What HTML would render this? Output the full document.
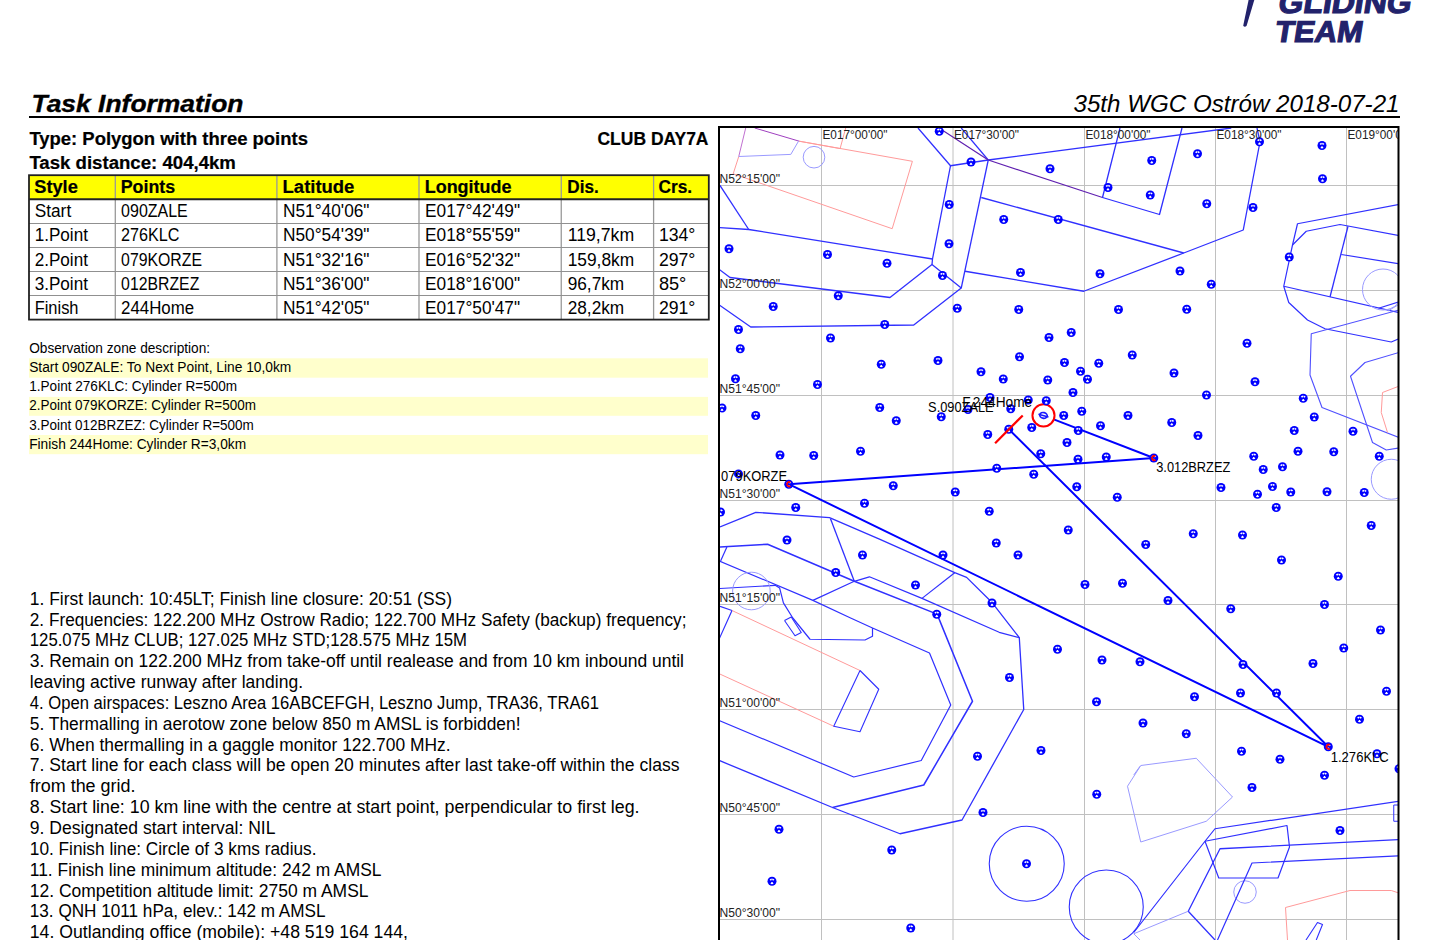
<!DOCTYPE html>
<html><head><meta charset="utf-8"><title>Task Information</title>
<style>html,body{margin:0;padding:0;background:#fff;width:1440px;height:940px;overflow:hidden}
svg{display:block;font-family:"Liberation Sans", sans-serif}</style></head>
<body><svg width="1440" height="940" viewBox="0 0 1440 940">
<defs>
<symbol id="w" viewBox="-5 -5 10 10" overflow="visible"><circle r="4.5" fill="#0000ff"/><path d="M-1.04,-0.60 L-2.42,-1.40 A2.8,2.8 0 0 1 -0.34,-2.78 L-0.15,-1.19 A1.2,1.2 0 0 0 -1.04,-0.60 Z M0.15,-1.19 L0.34,-2.78 A2.8,2.8 0 0 1 2.42,-1.40 L1.04,-0.60 A1.2,1.2 0 0 0 0.15,-1.19 Z M0.42,0.68 L1.59,2.54 A3.0,3.0 0 0 1 -1.59,2.54 L-0.42,0.68 A0.8,0.8 0 0 0 0.42,0.68 Z" fill="#fff"/></symbol>
<clipPath id="mc"><rect x="720" y="128" width="678" height="812"/></clipPath>
</defs>
<g fill="#22226b" stroke="#22226b" stroke-width="1.1" font-weight="bold" font-size="30">
<text transform="translate(1277.3,13.1) skewX(-9)" textLength="133" lengthAdjust="spacingAndGlyphs">GLIDING</text>
<text transform="translate(1274.0,42) skewX(-9)" textLength="87.5" lengthAdjust="spacingAndGlyphs">TEAM</text>
</g>
<path d="M1248.8,-1 L1254.6,-1 L1246.6,25.8 Q1244.8,27.8 1243.2,25.8 Z" fill="#22226b"/>
<text x="31.5" y="112" font-size="23.5" font-weight="bold" font-style="italic" textLength="212.0" lengthAdjust="spacingAndGlyphs" stroke="#000" stroke-width="0.35">Task Information</text>
<text x="1073.5" y="112" font-size="23.5" font-style="italic" textLength="326.0" lengthAdjust="spacingAndGlyphs">35th WGC Ostrów 2018-07-21</text>
<rect x="29" y="116" width="1371" height="2" fill="#000"/>
<text x="29.4" y="144.7" font-size="17.5" font-weight="bold" textLength="278.5" lengthAdjust="spacingAndGlyphs" stroke="#000" stroke-width="0.2">Type: Polygon with three points</text>
<text x="29.4" y="168.7" font-size="17.5" font-weight="bold" textLength="206.5" lengthAdjust="spacingAndGlyphs" stroke="#000" stroke-width="0.2">Task distance: 404,4km</text>
<text x="597.5" y="144.7" font-size="17.5" font-weight="bold" textLength="111.0" lengthAdjust="spacingAndGlyphs" stroke="#000" stroke-width="0.2">CLUB DAY7A</text>
<rect x="29" y="175.2" width="679.8" height="24.0" fill="#ffff00"/>
<line x1="115.3" y1="175.2" x2="115.3" y2="319.6" stroke="#999" stroke-width="1.3"/>
<line x1="276.9" y1="175.2" x2="276.9" y2="319.6" stroke="#999" stroke-width="1.3"/>
<line x1="419.0" y1="175.2" x2="419.0" y2="319.6" stroke="#999" stroke-width="1.3"/>
<line x1="561.25" y1="175.2" x2="561.25" y2="319.6" stroke="#999" stroke-width="1.3"/>
<line x1="653.6" y1="175.2" x2="653.6" y2="319.6" stroke="#999" stroke-width="1.3"/>
<line x1="29" y1="223.5" x2="708.8" y2="223.5" stroke="#909090" stroke-width="1"/>
<line x1="29" y1="247.5" x2="708.8" y2="247.5" stroke="#909090" stroke-width="1"/>
<line x1="29" y1="271.5" x2="708.8" y2="271.5" stroke="#909090" stroke-width="1"/>
<line x1="29" y1="295.5" x2="708.8" y2="295.5" stroke="#909090" stroke-width="1"/>
<line x1="29" y1="199.2" x2="708.8" y2="199.2" stroke="#222" stroke-width="2"/>
<rect x="29" y="175.2" width="679.8" height="144.40000000000003" fill="none" stroke="#222" stroke-width="1.8"/>
<text x="34.300000000000004" y="192.8" font-size="17.5" font-weight="bold" textLength="43.5" lengthAdjust="spacingAndGlyphs" stroke="#000" stroke-width="0.2">Style</text>
<text x="120.7" y="192.8" font-size="17.5" font-weight="bold" textLength="54.4" lengthAdjust="spacingAndGlyphs" stroke="#000" stroke-width="0.2">Points</text>
<text x="282.59999999999997" y="192.8" font-size="17.5" font-weight="bold" textLength="71.8" lengthAdjust="spacingAndGlyphs" stroke="#000" stroke-width="0.2">Latitude</text>
<text x="424.7" y="192.8" font-size="17.5" font-weight="bold" textLength="86.8" lengthAdjust="spacingAndGlyphs" stroke="#000" stroke-width="0.2">Longitude</text>
<text x="567.3" y="192.8" font-size="17.5" font-weight="bold" textLength="31.4" lengthAdjust="spacingAndGlyphs" stroke="#000" stroke-width="0.2">Dis.</text>
<text x="658.5000000000001" y="192.8" font-size="17.5" font-weight="bold" textLength="33.6" lengthAdjust="spacingAndGlyphs" stroke="#000" stroke-width="0.2">Crs.</text>
<text x="34.7" y="217.2" font-size="17.5" textLength="36.5" lengthAdjust="spacingAndGlyphs">Start</text>
<text x="121.1" y="217.2" font-size="17.5" textLength="66.7" lengthAdjust="spacingAndGlyphs">090ZALE</text>
<text x="283.0" y="217.2" font-size="17.5" textLength="86.5" lengthAdjust="spacingAndGlyphs">N51°40'06&quot;</text>
<text x="425.1" y="217.2" font-size="17.5" textLength="95.0" lengthAdjust="spacingAndGlyphs">E017°42'49&quot;</text>
<text x="34.7" y="241.1" font-size="17.5" textLength="53.2" lengthAdjust="spacingAndGlyphs">1.Point</text>
<text x="121.1" y="241.1" font-size="17.5" textLength="58.4" lengthAdjust="spacingAndGlyphs">276KLC</text>
<text x="283.0" y="241.1" font-size="17.5" textLength="86.5" lengthAdjust="spacingAndGlyphs">N50°54'39&quot;</text>
<text x="425.1" y="241.1" font-size="17.5" textLength="95.0" lengthAdjust="spacingAndGlyphs">E018°55'59&quot;</text>
<text x="567.6999999999999" y="241.1" font-size="17.5" textLength="66.5" lengthAdjust="spacingAndGlyphs">119,7km</text>
<text x="658.9000000000001" y="241.1" font-size="17.5" textLength="36.5" lengthAdjust="spacingAndGlyphs">134°</text>
<text x="34.7" y="265.5" font-size="17.5" textLength="53.2" lengthAdjust="spacingAndGlyphs">2.Point</text>
<text x="121.1" y="265.5" font-size="17.5" textLength="80.9" lengthAdjust="spacingAndGlyphs">079KORZE</text>
<text x="283.0" y="265.5" font-size="17.5" textLength="86.5" lengthAdjust="spacingAndGlyphs">N51°32'16&quot;</text>
<text x="425.1" y="265.5" font-size="17.5" textLength="95.0" lengthAdjust="spacingAndGlyphs">E016°52'32&quot;</text>
<text x="567.6999999999999" y="265.5" font-size="17.5" textLength="66.5" lengthAdjust="spacingAndGlyphs">159,8km</text>
<text x="658.9000000000001" y="265.5" font-size="17.5" textLength="36.5" lengthAdjust="spacingAndGlyphs">297°</text>
<text x="34.7" y="289.7" font-size="17.5" textLength="53.2" lengthAdjust="spacingAndGlyphs">3.Point</text>
<text x="121.1" y="289.7" font-size="17.5" textLength="78.2" lengthAdjust="spacingAndGlyphs">012BRZEZ</text>
<text x="283.0" y="289.7" font-size="17.5" textLength="86.5" lengthAdjust="spacingAndGlyphs">N51°36'00&quot;</text>
<text x="425.1" y="289.7" font-size="17.5" textLength="95.0" lengthAdjust="spacingAndGlyphs">E018°16'00&quot;</text>
<text x="567.6999999999999" y="289.7" font-size="17.5" textLength="56.5" lengthAdjust="spacingAndGlyphs">96,7km</text>
<text x="658.9000000000001" y="289.7" font-size="17.5" textLength="27.5" lengthAdjust="spacingAndGlyphs">85°</text>
<text x="34.7" y="313.6" font-size="17.5" textLength="43.8" lengthAdjust="spacingAndGlyphs">Finish</text>
<text x="121.1" y="313.6" font-size="17.5" textLength="73.0" lengthAdjust="spacingAndGlyphs">244Home</text>
<text x="283.0" y="313.6" font-size="17.5" textLength="86.5" lengthAdjust="spacingAndGlyphs">N51°42'05&quot;</text>
<text x="425.1" y="313.6" font-size="17.5" textLength="95.0" lengthAdjust="spacingAndGlyphs">E017°50'47&quot;</text>
<text x="567.6999999999999" y="313.6" font-size="17.5" textLength="56.5" lengthAdjust="spacingAndGlyphs">28,2km</text>
<text x="658.9000000000001" y="313.6" font-size="17.5" textLength="36.5" lengthAdjust="spacingAndGlyphs">291°</text>
<rect x="29" y="358.3" width="679" height="19.4" fill="#ffffcc"/>
<rect x="29" y="396.9" width="679" height="18.9" fill="#ffffcc"/>
<rect x="29" y="435" width="679" height="19.2" fill="#ffffcc"/>
<text x="29.2" y="352.7" font-size="14" textLength="180.9" lengthAdjust="spacingAndGlyphs">Observation zone description:</text>
<text x="29.2" y="371.9" font-size="14" textLength="262.1" lengthAdjust="spacingAndGlyphs">Start 090ZALE: To Next Point, Line 10,0km</text>
<text x="29.2" y="391.1" font-size="14" textLength="208.0" lengthAdjust="spacingAndGlyphs">1.Point 276KLC: Cylinder R=500m</text>
<text x="29.2" y="410.3" font-size="14" textLength="226.7" lengthAdjust="spacingAndGlyphs">2.Point 079KORZE: Cylinder R=500m</text>
<text x="29.2" y="429.5" font-size="14" textLength="224.6" lengthAdjust="spacingAndGlyphs">3.Point 012BRZEZ: Cylinder R=500m</text>
<text x="29.2" y="448.7" font-size="14" textLength="216.9" lengthAdjust="spacingAndGlyphs">Finish 244Home: Cylinder R=3,0km</text>
<text x="29.8" y="604.6" font-size="17.5" textLength="422.2" lengthAdjust="spacingAndGlyphs">1. First launch: 10:45LT; Finish line closure: 20:51 (SS)</text>
<text x="29.8" y="625.5" font-size="17.5" textLength="656.7" lengthAdjust="spacingAndGlyphs">2. Frequencies: 122.200 MHz Ostrow Radio; 122.700 MHz Safety (backup) frequency;</text>
<text x="29.8" y="646.3" font-size="17.5" textLength="437.2" lengthAdjust="spacingAndGlyphs">125.075 MHz CLUB; 127.025 MHz STD;128.575 MHz 15M</text>
<text x="29.8" y="667.1" font-size="17.5" textLength="654.2" lengthAdjust="spacingAndGlyphs">3. Remain on 122.200 MHz from take-off until realease and from 10 km inbound until</text>
<text x="29.8" y="688.0" font-size="17.5" textLength="273.2" lengthAdjust="spacingAndGlyphs">leaving active runway after landing.</text>
<text x="29.8" y="708.9" font-size="17.5" textLength="569.2" lengthAdjust="spacingAndGlyphs">4. Open airspaces: Leszno Area 16ABCEFGH, Leszno Jump, TRA36, TRA61</text>
<text x="29.8" y="729.7" font-size="17.5" textLength="490.7" lengthAdjust="spacingAndGlyphs">5. Thermalling in aerotow zone below 850 m AMSL is forbidden!</text>
<text x="29.8" y="750.6" font-size="17.5" textLength="420.7" lengthAdjust="spacingAndGlyphs">6. When thermalling in a gaggle monitor 122.700 MHz.</text>
<text x="29.8" y="771.4" font-size="17.5" textLength="649.7" lengthAdjust="spacingAndGlyphs">7. Start line for each class will be open 20 minutes after last take-off within the class</text>
<text x="29.8" y="792.2" font-size="17.5" textLength="105.7" lengthAdjust="spacingAndGlyphs">from the grid.</text>
<text x="29.8" y="813.1" font-size="17.5" textLength="609.7" lengthAdjust="spacingAndGlyphs">8. Start line: 10 km line with the centre at start point, perpendicular to first leg.</text>
<text x="29.8" y="834.0" font-size="17.5" textLength="245.7" lengthAdjust="spacingAndGlyphs">9. Designated start interval: NIL</text>
<text x="29.8" y="854.8" font-size="17.5" textLength="286.7" lengthAdjust="spacingAndGlyphs">10. Finish line: Circle of 3 kms radius.</text>
<text x="29.8" y="875.7" font-size="17.5" textLength="351.7" lengthAdjust="spacingAndGlyphs">11. Finish line minimum altitude: 242 m AMSL</text>
<text x="29.8" y="896.5" font-size="17.5" textLength="338.7" lengthAdjust="spacingAndGlyphs">12. Competition altitude limit: 2750 m AMSL</text>
<text x="29.8" y="917.4" font-size="17.5" textLength="295.7" lengthAdjust="spacingAndGlyphs">13. QNH 1011 hPa, elev.: 142 m AMSL</text>
<text x="29.8" y="938.2" font-size="17.5" textLength="378.2" lengthAdjust="spacingAndGlyphs">14. Outlanding office (mobile): +48 519 164 144,</text>
<g clip-path="url(#mc)">
<line x1="821.5" y1="128" x2="821.5" y2="940" stroke="#c0c0c0" stroke-width="1"/>
<line x1="953.0" y1="128" x2="953.0" y2="940" stroke="#c0c0c0" stroke-width="1"/>
<line x1="1084.5" y1="128" x2="1084.5" y2="940" stroke="#c0c0c0" stroke-width="1"/>
<line x1="1215.5" y1="128" x2="1215.5" y2="940" stroke="#c0c0c0" stroke-width="1"/>
<line x1="1346.5" y1="128" x2="1346.5" y2="940" stroke="#c0c0c0" stroke-width="1"/>
<line x1="720" y1="185.5" x2="1398" y2="185.5" stroke="#c0c0c0" stroke-width="1"/>
<line x1="720" y1="290.5" x2="1398" y2="290.5" stroke="#c0c0c0" stroke-width="1"/>
<line x1="720" y1="395.5" x2="1398" y2="395.5" stroke="#c0c0c0" stroke-width="1"/>
<line x1="720" y1="500.5" x2="1398" y2="500.5" stroke="#c0c0c0" stroke-width="1"/>
<line x1="720" y1="604.5" x2="1398" y2="604.5" stroke="#c0c0c0" stroke-width="1"/>
<line x1="720" y1="709.5" x2="1398" y2="709.5" stroke="#c0c0c0" stroke-width="1"/>
<line x1="720" y1="814.5" x2="1398" y2="814.5" stroke="#c0c0c0" stroke-width="1"/>
<line x1="720" y1="919.5" x2="1398" y2="919.5" stroke="#c0c0c0" stroke-width="1"/>
<path d="M738.75,156.5 L733.2,173.8 L892.2,228.7 L912.4,161.3 L799.2,141.2 L840.1,148.6" fill="none" stroke="#ff9a9a" stroke-width="1.0" stroke-linejoin="round"/>
<path d="M840.1,148.6 L845.7,128" fill="none" stroke="#ff9a9a" stroke-width="1.0" stroke-linejoin="round"/>
<path d="M754.7,128 L799.2,141.2" fill="none" stroke="#a040c0" stroke-width="1.0" stroke-linejoin="round"/>
<path d="M745.7,128 L738.75,156.5" fill="none" stroke="#c070d0" stroke-width="1.0" stroke-linejoin="round"/>
<path d="M738.75,156.5 L790.8,154.4 L798.5,141.2" fill="none" stroke="#9a9aff" stroke-width="1.0" stroke-linejoin="round"/>
<circle cx="814" cy="157.2" r="10.8" fill="none" stroke="#9a9aff" stroke-width="1.0"/>
<path d="M918,128 L950.5,165.75 L988.25,160 L1231.25,128" fill="none" stroke="#3030ff" stroke-width="1.3" stroke-linejoin="round"/>
<path d="M961.25,128 L988.25,160" fill="none" stroke="#3030ff" stroke-width="1.2" stroke-linejoin="round"/>
<path d="M939,128 L988.25,160 L1102.5,197.5" fill="none" stroke="#6020b0" stroke-width="1.2" stroke-linejoin="round"/>
<path d="M950.5,165.75 L932.5,259 L932,264.5" fill="none" stroke="#3030ff" stroke-width="1.3" stroke-linejoin="round"/>
<path d="M988.25,160 L961.25,288" fill="none" stroke="#3030ff" stroke-width="1.3" stroke-linejoin="round"/>
<path d="M719,184 L748.75,229.5" fill="none" stroke="#3030ff" stroke-width="1.3" stroke-linejoin="round"/>
<path d="M719.25,227.5 L748.75,229.5 L932.5,259" fill="none" stroke="#3030ff" stroke-width="1.3" stroke-linejoin="round"/>
<path d="M719.25,269.5 L730,277.5 L890,297.5 L932,264.5 L961.25,288 L913.75,325 L750.75,327 L719.25,305" fill="none" stroke="#3030ff" stroke-width="1.3" stroke-linejoin="round"/>
<path d="M981.25,197.5 L1183.75,253" fill="none" stroke="#3030ff" stroke-width="1.3" stroke-linejoin="round"/>
<path d="M965,271.25 L1083.75,291.25 L1183.75,253 L1243.25,230 L1260,141.75 L1257,128" fill="none" stroke="#3030ff" stroke-width="1.3" stroke-linejoin="round"/>
<path d="M1120,128 L1102.5,197.5 L1159.5,214.5 L1182,128" fill="none" stroke="#3030ff" stroke-width="1.3" stroke-linejoin="round"/>
<path d="M1398.75,204.5 L1297.5,223.75 L1292.5,245 L1283.75,286.25 L1398.75,312.5" fill="none" stroke="#3030ff" stroke-width="1.2" stroke-linejoin="round"/>
<path d="M1292.5,245 L1306.25,231.25 L1340,224.5 L1398.75,235.5" fill="none" stroke="#3030ff" stroke-width="1.2" stroke-linejoin="round"/>
<path d="M1348,226.25 L1330,297" fill="none" stroke="#3030ff" stroke-width="1.3" stroke-linejoin="round"/>
<path d="M1341.25,254.5 L1398.75,263.75" fill="none" stroke="#3030ff" stroke-width="1.2" stroke-linejoin="round"/>
<path d="M1283.75,286.25 L1288.75,302.5 L1307.5,320 L1325,328.75 L1391.25,342 L1398.75,338.75" fill="none" stroke="#3030ff" stroke-width="1.2" stroke-linejoin="round"/>
<path d="M1398.75,310 L1311.25,333.75 L1310,375 L1322,407.5 L1398.75,437.5" fill="none" stroke="#5050ff" stroke-width="1.1" stroke-linejoin="round"/>
<path d="M1398.75,352.5 L1365,362.5 L1350.5,376.25 L1372.5,442.5 L1386.25,450 L1398.75,448" fill="none" stroke="#5050ff" stroke-width="1.1" stroke-linejoin="round"/>
<path d="M1398.75,386.25 L1382.5,392.5 L1381.25,412.5 L1387.5,432.5" fill="none" stroke="#ff9a9a" stroke-width="1.0" stroke-linejoin="round"/>
<circle cx="1383" cy="289.5" r="20.5" fill="none" stroke="#9a9aff" stroke-width="1.0"/>
<circle cx="1391.25" cy="479.25" r="20" fill="none" stroke="#9a9aff" stroke-width="1.0"/>
<path d="M1378.6,308.3 L1398.75,302" fill="none" stroke="#3030ff" stroke-width="1.2" stroke-linejoin="round"/>
<path d="M1388,311 L1398.75,304.5" fill="none" stroke="#9a9aff" stroke-width="1.0" stroke-linejoin="round"/>
<path d="M720,527 L755.8,512.3 L829.5,517.6 L880,539.4 L954.7,572.7 L966.6,577.4 L992.3,602.8 L1019.3,637.7 L1023.75,709.5 L962,820 L900,833.75 L832.5,807.5 L719.25,760.5" fill="none" stroke="#3030ff" stroke-width="1.3" stroke-linejoin="round"/>
<path d="M830.5,518.8 L854.3,581.3" fill="none" stroke="#3030ff" stroke-width="1.3" stroke-linejoin="round"/>
<path d="M719.25,547 L767.6,544.3 L854.3,581.3 L937.1,614.1 L972.5,701.25 L923.75,785 L832.5,807.5" fill="none" stroke="#3030ff" stroke-width="1.5" stroke-linejoin="round"/>
<path d="M720,561.25 L812.9,600.4 L850.6,618 L872.5,628 L929.5,653 L950.75,705 L921.25,760.5 L853.75,777 L719.25,720.5" fill="none" stroke="#3030ff" stroke-width="1.2" stroke-linejoin="round"/>
<path d="M812.9,600.4 L854.3,581.3 L869.4,576.8 L922,598.4 L999.2,632.3 L1019.3,637.7" fill="none" stroke="#3030ff" stroke-width="1.2" stroke-linejoin="round"/>
<path d="M954.7,572.7 L922,598.4" fill="none" stroke="#3030ff" stroke-width="1.2" stroke-linejoin="round"/>
<path d="M720,588.5 L775.2,585.35 L779.6,587.9 L783.4,602.9 L792.8,618 L810,639.25 L865,640 L872.5,636.25 L872.5,628" fill="none" stroke="#3030ff" stroke-width="1.2" stroke-linejoin="round"/>
<path d="M720.6,560.9 L726.9,547" fill="none" stroke="#3030ff" stroke-width="1.2" stroke-linejoin="round"/>
<path d="M720,606.4 L732,610.5 L719.25,638.75" fill="none" stroke="#3030ff" stroke-width="1.2" stroke-linejoin="round"/>
<path d="M732,610.5 L860,670.5" fill="none" stroke="#ff9a9a" stroke-width="1.0" stroke-linejoin="round"/>
<path d="M719.25,673.75 L833.75,726.25" fill="none" stroke="#ff9a9a" stroke-width="1.0" stroke-linejoin="round"/>
<path d="M860,670.5 L878.75,689.25 L860,731.75 L833.75,726.25 L860,670.5" fill="none" stroke="#3030ff" stroke-width="1.1" stroke-linejoin="round"/>
<path d="M784.5,620.5 L791.25,617 L801.25,632.5 L795,635.75 L784.5,620.5" fill="none" stroke="#3030ff" stroke-width="1.1" stroke-linejoin="round"/>
<circle cx="751.4" cy="591" r="18.8" fill="none" stroke="#9a9aff" stroke-width="1.0"/>
<circle cx="1026.75" cy="863.75" r="37.5" fill="none" stroke="#3030ff" stroke-width="1.1"/>
<circle cx="1106.25" cy="907" r="37" fill="none" stroke="#3030ff" stroke-width="1.1"/>
<circle cx="1245" cy="892" r="11.25" fill="none" stroke="#9a9aff" stroke-width="1.0"/>
<path d="M1140.75,765.5 L1196.25,758.25 L1232.5,797 L1206.25,821.25 L1140.75,842 L1127.5,786.25 L1140.75,765.5" fill="none" stroke="#9a9aff" stroke-width="1.0" stroke-linejoin="round"/>
<path d="M1133.75,932.5 L1205,841.25 L1215,828.75 L1398.75,801.25" fill="none" stroke="#3030ff" stroke-width="1.2" stroke-linejoin="round"/>
<path d="M1205,841.25 L1287,825.5 L1289.5,847 L1278,878 L1218.75,878 L1205,841.25" fill="none" stroke="#3030ff" stroke-width="1.2" stroke-linejoin="round"/>
<path d="M1398.75,839.5 L1220,848.75 L1188.25,911.25 L1215,940" fill="none" stroke="#3030ff" stroke-width="1.3" stroke-linejoin="round"/>
<path d="M1398.75,855.75 L1252,863 L1217.5,940" fill="none" stroke="#3030ff" stroke-width="1.2" stroke-linejoin="round"/>
<path d="M1188.25,911.25 L1133.75,933.75 L1140,940" fill="none" stroke="#9a9aff" stroke-width="1.0" stroke-linejoin="round"/>
<path d="M1287.5,940 L1285.5,907.5 L1350,890.5 L1391.25,890.5 L1398.75,893" fill="none" stroke="#ff9a9a" stroke-width="1.0" stroke-linejoin="round"/>
<path d="M1398.75,805 L1393.75,805 L1393.75,821.25 L1398.75,821.25" fill="none" stroke="#3030ff" stroke-width="1.0" stroke-linejoin="round"/>
<path d="M1306,940 L1317.5,922.5 L1322.5,924.5 L1316.25,940" fill="none" stroke="#3030ff" stroke-width="1.1" stroke-linejoin="round"/>
<path d="M1133.75,775 L1140,766.25" fill="none" stroke="#9a9aff" stroke-width="1.0" stroke-linejoin="round"/>
<path d="M1008.8,429.3 L1328.3,746.8 L788.8,484.2 L1153.8,458.0" fill="none" stroke="#0000ff" stroke-width="2.0" stroke-linejoin="round"/>
<path d="M1053.761276954651,419.3631042454047 L1153.8,458.0" fill="none" stroke="#0000ff" stroke-width="2.0" stroke-linejoin="round"/>
<circle cx="1043.5" cy="415.4" r="11.05" fill="none" stroke="#ff0000" stroke-width="2.0"/>
<use href="#w" x="934.25" y="126.25" width="10" height="10"/>
<use href="#w" x="966" y="157" width="10" height="10"/>
<use href="#w" x="1045" y="163.75" width="10" height="10"/>
<use href="#w" x="944.25" y="199.5" width="10" height="10"/>
<use href="#w" x="998.75" y="214.5" width="10" height="10"/>
<use href="#w" x="1053.25" y="214.5" width="10" height="10"/>
<use href="#w" x="944" y="238.75" width="10" height="10"/>
<use href="#w" x="724" y="243.75" width="10" height="10"/>
<use href="#w" x="822.5" y="249.5" width="10" height="10"/>
<use href="#w" x="882" y="258.25" width="10" height="10"/>
<use href="#w" x="1015.5" y="267.5" width="10" height="10"/>
<use href="#w" x="937.5" y="270.5" width="10" height="10"/>
<use href="#w" x="833.25" y="290.75" width="10" height="10"/>
<use href="#w" x="768.25" y="301.5" width="10" height="10"/>
<use href="#w" x="952.25" y="303.25" width="10" height="10"/>
<use href="#w" x="1013.75" y="304.5" width="10" height="10"/>
<use href="#w" x="733.5" y="324.5" width="10" height="10"/>
<use href="#w" x="879.75" y="319.5" width="10" height="10"/>
<use href="#w" x="825.5" y="333" width="10" height="10"/>
<use href="#w" x="1044" y="332.5" width="10" height="10"/>
<use href="#w" x="1066.25" y="327.5" width="10" height="10"/>
<use href="#w" x="735.25" y="343.75" width="10" height="10"/>
<use href="#w" x="1146.75" y="155.5" width="10" height="10"/>
<use href="#w" x="1192.5" y="148.75" width="10" height="10"/>
<use href="#w" x="1254.5" y="136.75" width="10" height="10"/>
<use href="#w" x="1317" y="140.5" width="10" height="10"/>
<use href="#w" x="1317.5" y="173.75" width="10" height="10"/>
<use href="#w" x="1103" y="182.5" width="10" height="10"/>
<use href="#w" x="1145.25" y="190" width="10" height="10"/>
<use href="#w" x="1201.75" y="198.75" width="10" height="10"/>
<use href="#w" x="1248" y="202.5" width="10" height="10"/>
<use href="#w" x="1284.25" y="252" width="10" height="10"/>
<use href="#w" x="1095" y="268.75" width="10" height="10"/>
<use href="#w" x="1175" y="266" width="10" height="10"/>
<use href="#w" x="1206.25" y="279.25" width="10" height="10"/>
<use href="#w" x="1113.5" y="304.5" width="10" height="10"/>
<use href="#w" x="1181.75" y="304.25" width="10" height="10"/>
<use href="#w" x="1242" y="338.25" width="10" height="10"/>
<use href="#w" x="876.25" y="359.25" width="10" height="10"/>
<use href="#w" x="933" y="355.5" width="10" height="10"/>
<use href="#w" x="1014.5" y="351.75" width="10" height="10"/>
<use href="#w" x="1059.5" y="357.5" width="10" height="10"/>
<use href="#w" x="976" y="366.75" width="10" height="10"/>
<use href="#w" x="998.25" y="374" width="10" height="10"/>
<use href="#w" x="1042.75" y="375" width="10" height="10"/>
<use href="#w" x="730.5" y="373.75" width="10" height="10"/>
<use href="#w" x="812.5" y="379.5" width="10" height="10"/>
<use href="#w" x="1068" y="387.5" width="10" height="10"/>
<use href="#w" x="985" y="392.5" width="10" height="10"/>
<use href="#w" x="1023.25" y="395" width="10" height="10"/>
<use href="#w" x="1041.25" y="395.75" width="10" height="10"/>
<use href="#w" x="717" y="403" width="10" height="10"/>
<use href="#w" x="750.75" y="410.5" width="10" height="10"/>
<use href="#w" x="874.75" y="402.5" width="10" height="10"/>
<use href="#w" x="891.25" y="415.75" width="10" height="10"/>
<use href="#w" x="936.25" y="411.75" width="10" height="10"/>
<use href="#w" x="963" y="404.5" width="10" height="10"/>
<use href="#w" x="1005.75" y="403.75" width="10" height="10"/>
<use href="#w" x="1058.75" y="410.5" width="10" height="10"/>
<use href="#w" x="982.75" y="429.5" width="10" height="10"/>
<use href="#w" x="1003.75" y="424.25" width="10" height="10"/>
<use href="#w" x="1026.75" y="422.5" width="10" height="10"/>
<use href="#w" x="1062" y="437.5" width="10" height="10"/>
<use href="#w" x="775" y="450" width="10" height="10"/>
<use href="#w" x="808.75" y="450.5" width="10" height="10"/>
<use href="#w" x="855.5" y="446.25" width="10" height="10"/>
<use href="#w" x="1035.75" y="448.75" width="10" height="10"/>
<use href="#w" x="991.75" y="463.25" width="10" height="10"/>
<use href="#w" x="1028.75" y="469.25" width="10" height="10"/>
<use href="#w" x="733.5" y="468.9" width="10" height="10"/>
<use href="#w" x="888.25" y="480.75" width="10" height="10"/>
<use href="#w" x="950.25" y="487" width="10" height="10"/>
<use href="#w" x="715.5" y="507" width="10" height="10"/>
<use href="#w" x="790.75" y="502.5" width="10" height="10"/>
<use href="#w" x="859.5" y="498.25" width="10" height="10"/>
<use href="#w" x="984.25" y="506.25" width="10" height="10"/>
<use href="#w" x="1063.25" y="525" width="10" height="10"/>
<use href="#w" x="782" y="535" width="10" height="10"/>
<use href="#w" x="991.25" y="538" width="10" height="10"/>
<use href="#w" x="857.5" y="550" width="10" height="10"/>
<use href="#w" x="938" y="550" width="10" height="10"/>
<use href="#w" x="1013" y="550" width="10" height="10"/>
<use href="#w" x="1127.25" y="350" width="10" height="10"/>
<use href="#w" x="1093.75" y="358.25" width="10" height="10"/>
<use href="#w" x="1075.5" y="366.25" width="10" height="10"/>
<use href="#w" x="1082.5" y="374.25" width="10" height="10"/>
<use href="#w" x="1169" y="368" width="10" height="10"/>
<use href="#w" x="1250" y="376.75" width="10" height="10"/>
<use href="#w" x="1201.5" y="390" width="10" height="10"/>
<use href="#w" x="1298.25" y="393.25" width="10" height="10"/>
<use href="#w" x="1076.75" y="406.25" width="10" height="10"/>
<use href="#w" x="1123" y="410.5" width="10" height="10"/>
<use href="#w" x="1095.5" y="420.75" width="10" height="10"/>
<use href="#w" x="1166.75" y="417.5" width="10" height="10"/>
<use href="#w" x="1309.25" y="412" width="10" height="10"/>
<use href="#w" x="1073.25" y="425.5" width="10" height="10"/>
<use href="#w" x="1193" y="430.5" width="10" height="10"/>
<use href="#w" x="1289.25" y="425.5" width="10" height="10"/>
<use href="#w" x="1348" y="426.25" width="10" height="10"/>
<use href="#w" x="1293" y="446.25" width="10" height="10"/>
<use href="#w" x="1328.75" y="446.75" width="10" height="10"/>
<use href="#w" x="1073" y="454.25" width="10" height="10"/>
<use href="#w" x="1101.25" y="452" width="10" height="10"/>
<use href="#w" x="1248.75" y="451.25" width="10" height="10"/>
<use href="#w" x="1374.25" y="451.25" width="10" height="10"/>
<use href="#w" x="1258.25" y="464.5" width="10" height="10"/>
<use href="#w" x="1277.5" y="461.75" width="10" height="10"/>
<use href="#w" x="1071.75" y="481.75" width="10" height="10"/>
<use href="#w" x="1112.25" y="492.25" width="10" height="10"/>
<use href="#w" x="1216" y="482.5" width="10" height="10"/>
<use href="#w" x="1252.5" y="489.25" width="10" height="10"/>
<use href="#w" x="1267.5" y="481.5" width="10" height="10"/>
<use href="#w" x="1285.75" y="487" width="10" height="10"/>
<use href="#w" x="1322" y="486.75" width="10" height="10"/>
<use href="#w" x="1359.25" y="487.5" width="10" height="10"/>
<use href="#w" x="1271.25" y="502.5" width="10" height="10"/>
<use href="#w" x="1366.25" y="520.5" width="10" height="10"/>
<use href="#w" x="1140.75" y="539.5" width="10" height="10"/>
<use href="#w" x="1188.25" y="528.75" width="10" height="10"/>
<use href="#w" x="1237.5" y="530" width="10" height="10"/>
<use href="#w" x="1276.5" y="555" width="10" height="10"/>
<use href="#w" x="830.75" y="567.5" width="10" height="10"/>
<use href="#w" x="910.5" y="580" width="10" height="10"/>
<use href="#w" x="987" y="598" width="10" height="10"/>
<use href="#w" x="931.75" y="609.25" width="10" height="10"/>
<use href="#w" x="1052.5" y="644.25" width="10" height="10"/>
<use href="#w" x="1004.5" y="672.5" width="10" height="10"/>
<use href="#w" x="972.5" y="751.25" width="10" height="10"/>
<use href="#w" x="1036" y="745.5" width="10" height="10"/>
<use href="#w" x="1333.25" y="571.25" width="10" height="10"/>
<use href="#w" x="1080" y="579.5" width="10" height="10"/>
<use href="#w" x="1117.5" y="578.25" width="10" height="10"/>
<use href="#w" x="1163" y="595.5" width="10" height="10"/>
<use href="#w" x="1225.75" y="603.75" width="10" height="10"/>
<use href="#w" x="1319.5" y="599.5" width="10" height="10"/>
<use href="#w" x="1375.5" y="625" width="10" height="10"/>
<use href="#w" x="1338.75" y="643" width="10" height="10"/>
<use href="#w" x="1097" y="655" width="10" height="10"/>
<use href="#w" x="1135" y="656.75" width="10" height="10"/>
<use href="#w" x="1238" y="659.5" width="10" height="10"/>
<use href="#w" x="1308" y="658.5" width="10" height="10"/>
<use href="#w" x="1381.5" y="686.25" width="10" height="10"/>
<use href="#w" x="1091.5" y="696.75" width="10" height="10"/>
<use href="#w" x="1189.5" y="691.75" width="10" height="10"/>
<use href="#w" x="1235.5" y="688" width="10" height="10"/>
<use href="#w" x="1271.5" y="688" width="10" height="10"/>
<use href="#w" x="1354.5" y="714.25" width="10" height="10"/>
<use href="#w" x="1138" y="718" width="10" height="10"/>
<use href="#w" x="1181.25" y="728.75" width="10" height="10"/>
<use href="#w" x="1236.5" y="746.25" width="10" height="10"/>
<use href="#w" x="1275" y="754.25" width="10" height="10"/>
<use href="#w" x="1372" y="748.75" width="10" height="10"/>
<use href="#w" x="1319.5" y="770.25" width="10" height="10"/>
<use href="#w" x="1394" y="763.75" width="10" height="10"/>
<use href="#w" x="978" y="807.5" width="10" height="10"/>
<use href="#w" x="774" y="824.25" width="10" height="10"/>
<use href="#w" x="886.75" y="845" width="10" height="10"/>
<use href="#w" x="1021.5" y="858.75" width="10" height="10"/>
<use href="#w" x="767" y="876.25" width="10" height="10"/>
<use href="#w" x="905.75" y="923" width="10" height="10"/>
<use href="#w" x="1247" y="782.5" width="10" height="10"/>
<use href="#w" x="1091.75" y="789.25" width="10" height="10"/>
<use href="#w" x="1335" y="825.5" width="10" height="10"/>
<use href="#w" x="783.8" y="479.2" width="10" height="10"/>
<use href="#w" x="1148.8" y="453.0" width="10" height="10"/>
<use href="#w" x="1323.3" y="741.8" width="10" height="10"/>
<line x1="995.1" y1="443.2" x2="1022.7" y2="415.4" stroke="#ff0000" stroke-width="2.2"/>
<path d="M790.4,482.4 A2.2,2.2 0 1 0 790.4,486.0" fill="none" stroke="#ff0000" stroke-width="1.8"/>
<path d="M1155.3999999999999,456.2 A2.2,2.2 0 1 0 1155.3999999999999,459.8" fill="none" stroke="#ff0000" stroke-width="1.8"/>
<path d="M1329.8999999999999,745.0 A2.2,2.2 0 1 0 1329.8999999999999,748.5999999999999" fill="none" stroke="#ff0000" stroke-width="1.8"/>
<g transform="translate(1043.5,415.4) rotate(15)"><ellipse rx="3.8" ry="2.8" fill="none" stroke="#1a1aff" stroke-width="1.7"/><line x1="-5.2" y1="0.2" x2="5.2" y2="0.2" stroke="#1a1aff" stroke-width="1.5"/></g>
<text x="822.5" y="139" font-size="12" fill="#222" textLength="65.0" lengthAdjust="spacingAndGlyphs">E017°00'00&quot;</text>
<text x="954.0" y="139" font-size="12" fill="#222" textLength="65.0" lengthAdjust="spacingAndGlyphs">E017°30'00&quot;</text>
<text x="1085.5" y="139" font-size="12" fill="#222" textLength="65.0" lengthAdjust="spacingAndGlyphs">E018°00'00&quot;</text>
<text x="1216.5" y="139" font-size="12" fill="#222" textLength="65.0" lengthAdjust="spacingAndGlyphs">E018°30'00&quot;</text>
<text x="1347.5" y="139" font-size="12" fill="#222" textLength="65.0" lengthAdjust="spacingAndGlyphs">E019°00'00&quot;</text>
<text x="719.5" y="182.8" font-size="12" fill="#222" textLength="60.5" lengthAdjust="spacingAndGlyphs">N52°15'00&quot;</text>
<text x="719.5" y="287.8" font-size="12" fill="#222" textLength="60.5" lengthAdjust="spacingAndGlyphs">N52°00'00&quot;</text>
<text x="719.5" y="392.8" font-size="12" fill="#222" textLength="60.5" lengthAdjust="spacingAndGlyphs">N51°45'00&quot;</text>
<text x="719.5" y="497.8" font-size="12" fill="#222" textLength="60.5" lengthAdjust="spacingAndGlyphs">N51°30'00&quot;</text>
<text x="719.5" y="601.8" font-size="12" fill="#222" textLength="60.5" lengthAdjust="spacingAndGlyphs">N51°15'00&quot;</text>
<text x="719.5" y="706.8" font-size="12" fill="#222" textLength="60.5" lengthAdjust="spacingAndGlyphs">N51°00'00&quot;</text>
<text x="719.5" y="811.8" font-size="12" fill="#222" textLength="60.5" lengthAdjust="spacingAndGlyphs">N50°45'00&quot;</text>
<text x="719.5" y="916.8" font-size="12" fill="#222" textLength="60.5" lengthAdjust="spacingAndGlyphs">N50°30'00&quot;</text>
<text x="928.1" y="411.6" font-size="14" textLength="65.5" lengthAdjust="spacingAndGlyphs">S.090ZALE</text>
<text x="962.2" y="407.4" font-size="14" textLength="70.0" lengthAdjust="spacingAndGlyphs">F.244Home</text>
<text x="721.1" y="480.7" font-size="14" textLength="66.0" lengthAdjust="spacingAndGlyphs">079KORZE</text>
<text x="1156.25" y="472" font-size="14" textLength="74.0" lengthAdjust="spacingAndGlyphs">3.012BRZEZ</text>
<text x="1330.75" y="762" font-size="14" textLength="58.0" lengthAdjust="spacingAndGlyphs">1.276KLC</text>
</g>
<rect x="719" y="127" width="679.5" height="820" fill="none" stroke="#000" stroke-width="2"/>
</svg></body></html>
